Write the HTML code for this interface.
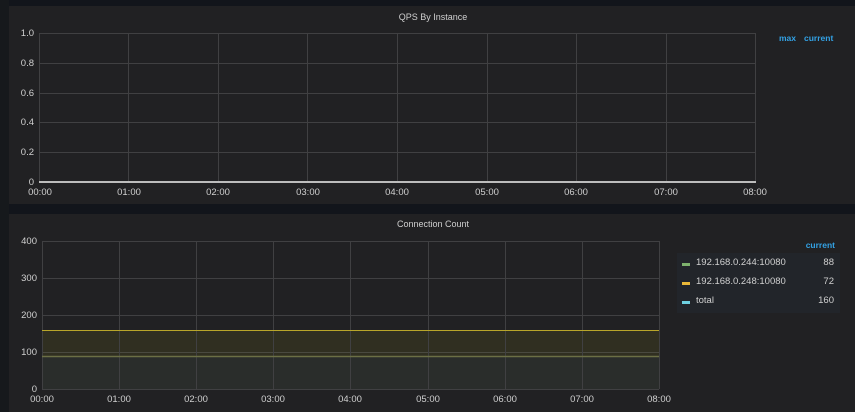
<!DOCTYPE html><html><head><style>
body{margin:0;width:855px;height:412px;background:#12151b;overflow:hidden;font-family:"Liberation Sans",sans-serif;}
svg{position:absolute;left:0;top:0}
text{font-family:"Liberation Sans",sans-serif;}
</style></head><body>
<svg width="855" height="412">
<rect x="0" y="0" width="855" height="412" fill="#12151b"/>
<rect x="0" y="0" width="9" height="412" fill="#16191c"/>
<rect x="9" y="6" width="846" height="198" fill="#212123"/>
<rect x="9" y="214" width="846" height="198" fill="#212123"/>
<text x="433" y="20" fill="#cfcfcf" font-size="9" text-anchor="middle">QPS By Instance</text>
<text x="433" y="227" fill="#cfcfcf" font-size="9" text-anchor="middle">Connection Count</text>
<g stroke="#404042" stroke-width="1">
<line x1="39" y1="33.5" x2="756" y2="33.5"/><line x1="39" y1="63.5" x2="756" y2="63.5"/><line x1="39" y1="93.5" x2="756" y2="93.5"/><line x1="39" y1="122.5" x2="756" y2="122.5"/><line x1="39" y1="152.5" x2="756" y2="152.5"/>
<line x1="39.5" y1="33" x2="39.5" y2="182"/><line x1="128.5" y1="33" x2="128.5" y2="182"/><line x1="218.5" y1="33" x2="218.5" y2="182"/><line x1="307.5" y1="33" x2="307.5" y2="182"/><line x1="397.5" y1="33" x2="397.5" y2="182"/><line x1="487.5" y1="33" x2="487.5" y2="182"/><line x1="576.5" y1="33" x2="576.5" y2="182"/><line x1="666.5" y1="33" x2="666.5" y2="182"/><line x1="755.5" y1="33" x2="755.5" y2="182"/>
</g>
<line x1="39" y1="182" x2="756" y2="182" stroke="#bdbdbd" stroke-width="2"/>
<g fill="#d0d0d0" font-size="9.5" text-anchor="end">
<text x="34" y="36">1.0</text><text x="34" y="66">0.8</text><text x="34" y="96">0.6</text><text x="34" y="125">0.4</text><text x="34" y="155">0.2</text><text x="34" y="185">0</text>
</g>
<g fill="#d0d0d0" font-size="9.5" text-anchor="middle">
<text x="40" y="195">00:00</text><text x="129" y="195">01:00</text><text x="218" y="195">02:00</text><text x="308" y="195">03:00</text><text x="397" y="195">04:00</text><text x="487" y="195">05:00</text><text x="576" y="195">06:00</text><text x="666" y="195">07:00</text><text x="755" y="195">08:00</text>
</g>
<text x="779" y="41" fill="#33a2e5" font-size="8.5" font-weight="bold">max</text>
<text x="804" y="41" fill="#33a2e5" font-size="8.5" font-weight="bold">current</text>
<rect x="42" y="356" width="617" height="33" fill="#2a2d2b"/>
<rect x="42" y="330" width="617" height="26" fill="#302f21"/>
<g stroke="#404042" stroke-width="1">
<line x1="42" y1="241.5" x2="659" y2="241.5"/><line x1="42" y1="278.5" x2="659" y2="278.5"/><line x1="42" y1="315.5" x2="659" y2="315.5"/><line x1="42" y1="352.5" x2="659" y2="352.5" stroke="#4a4a40"/>
<line x1="42.5" y1="241" x2="42.5" y2="389"/><line x1="119.5" y1="241" x2="119.5" y2="389"/><line x1="196.5" y1="241" x2="196.5" y2="389"/><line x1="273.5" y1="241" x2="273.5" y2="389"/><line x1="350.5" y1="241" x2="350.5" y2="389"/><line x1="428.5" y1="241" x2="428.5" y2="389"/><line x1="505.5" y1="241" x2="505.5" y2="389"/><line x1="582.5" y1="241" x2="582.5" y2="389"/><line x1="659.5" y1="241" x2="659.5" y2="389"/>
<line x1="42" y1="389.5" x2="659" y2="389.5"/>
</g>
<line x1="42" y1="330.5" x2="659" y2="330.5" stroke="#b9a62a" stroke-width="1"/>
<line x1="42" y1="356.5" x2="659" y2="356.5" stroke="#6b6f45" stroke-width="1.5"/>
<g fill="#d0d0d0" font-size="9.5" text-anchor="end">
<text x="37" y="244">400</text><text x="37" y="281">300</text><text x="37" y="318">200</text><text x="37" y="355">100</text><text x="37" y="392">0</text>
</g>
<g fill="#d0d0d0" font-size="9.5" text-anchor="middle">
<text x="42" y="402">00:00</text><text x="119" y="402">01:00</text><text x="196" y="402">02:00</text><text x="273" y="402">03:00</text><text x="350" y="402">04:00</text><text x="428" y="402">05:00</text><text x="505" y="402">06:00</text><text x="582" y="402">07:00</text><text x="659" y="402">08:00</text>
</g>
<text x="835" y="248" fill="#33a2e5" font-size="8.5" font-weight="bold" text-anchor="end">current</text>
<rect x="677" y="253" width="163" height="60" fill="#22252a"/>
<rect x="682" y="263" width="8" height="3" fill="#7eb26d"/>
<rect x="682" y="282" width="8" height="3" fill="#eab839"/>
<rect x="682" y="301" width="8" height="3" fill="#6ed0e0"/>
<g fill="#d0d0d0" font-size="9.5">
<text x="696" y="265">192.168.0.244:10080</text><text x="696" y="284">192.168.0.248:10080</text><text x="696" y="303">total</text>
</g>
<g fill="#d0d0d0" font-size="9.5" text-anchor="end">
<text x="834" y="265">88</text><text x="834" y="284">72</text><text x="834" y="303">160</text>
</g>
</svg>
</body></html>
